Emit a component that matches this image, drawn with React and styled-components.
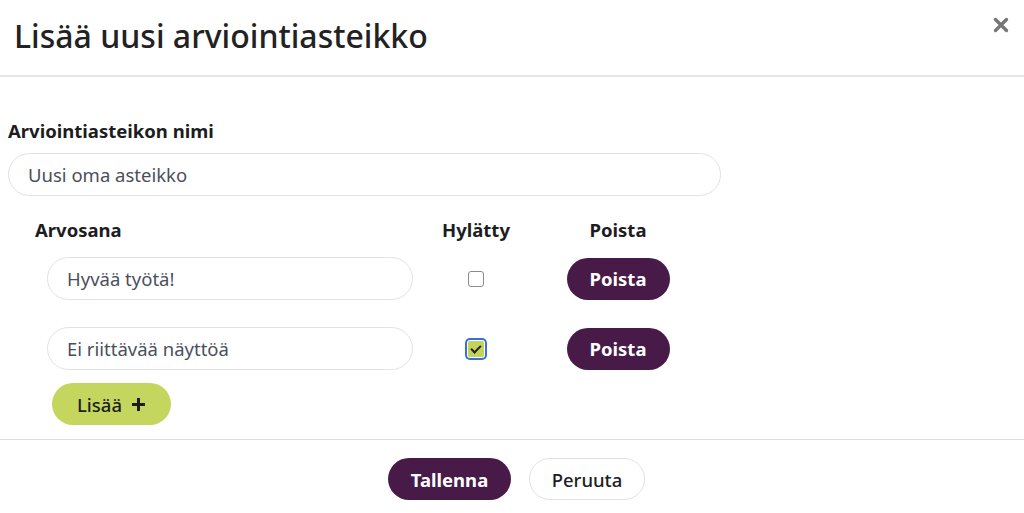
import React, { useState } from 'react';
import styled, { createGlobalStyle } from 'styled-components';

const GlobalStyle = createGlobalStyle`
  html, body {
    margin: 0;
    padding: 0;
    background: #fff;
  }
  body {
    font-family: "Noto Sans", "Open Sans", sans-serif;
    color: #1d1d1f;
  }
  * { box-sizing: border-box; }
`;

const App = () => {
  const [name, setName] = useState('Uusi oma asteikko');
  const [grades, setGrades] = useState([
    { label: 'Hyvää työtä!', failed: false },
    { label: 'Ei riittävää näyttöä', failed: true },
  ]);

  const update = (index, patch) => {
    setGrades(grades.map((g, i) => (i === index ? { ...g, ...patch } : g)));
  };

  return (
    <>
      <GlobalStyle />
      <Modal>
        <Header>
          <Title>Lisää uusi arviointiasteikko</Title>
          <CloseButton aria-label="Sulje">
            <svg width="16" height="16" viewBox="0 0 16 16">
              <path d="M2.5 2.5 L13.5 13.5 M13.5 2.5 L2.5 13.5" stroke="#777" strokeWidth="3.4" strokeLinecap="round" />
            </svg>
          </CloseButton>
        </Header>

        <Body>
          <Label>Arviointiasteikon nimi</Label>
          <TextInput value={name} onChange={e => setName(e.target.value)} />

          <TableHead>
            <HeadCell>Arvosana</HeadCell>
            <HeadCell center>Hylätty</HeadCell>
            <HeadCell center>Poista</HeadCell>
          </TableHead>

          <GradeRows>
            {grades.map((grade, index) => (
              <React.Fragment key={index}>
                <InputCell>
                  <TextInput
                    value={grade.label}
                    onChange={e => update(index, { label: e.target.value })}
                  />
                </InputCell>
                <CenterCell>
                  <Check
                    type="checkbox"
                    checked={grade.failed}
                    onChange={e => update(index, { failed: e.target.checked })}
                  />
                </CenterCell>
                <CenterCell>
                  <PillButton variant="dark" width="103px">Poista</PillButton>
                </CenterCell>
              </React.Fragment>
            ))}
          </GradeRows>

          <PillButton variant="lime" width="119px" className="add">
            Lisää
            <svg width="15" height="15" viewBox="0 0 15 15">
              <path d="M7.5 1 V14 M1 7.5 H14" stroke="#1d1d1f" strokeWidth="3" />
            </svg>
          </PillButton>
        </Body>

        <Footer>
          <PillButton variant="dark" width="123px">Tallenna</PillButton>
          <PillButton variant="light" width="116px">Peruuta</PillButton>
        </Footer>
      </Modal>
    </>
  );
};

export default App;

const Modal = styled.div`
  width: 1024px;
  height: 513px;
  background: #fff;
  display: flex;
  flex-direction: column;
`;

const Header = styled.div`
  height: 77px;
  padding: 0 14px;
  display: flex;
  justify-content: space-between;
  align-items: center;
  border-bottom: 2px solid #e6e6e6;
`;

const Title = styled.h2`
  margin: 0;
  font-size: 32px;
  font-weight: 500;
  color: #222;
  line-height: 40px;
  margin-top: -4px;
`;

const CloseButton = styled.button`
  border: none;
  background: none;
  padding: 0;
  margin-top: -26px;
  margin-right: 1px;
  display: flex;
  cursor: pointer;
`;

const Body = styled.div`
  padding: 43px 8px 0 8px;
  display: flex;
  flex-direction: column;
  align-items: flex-start;
  height: 362px;

  .add {
    margin: 13px 0 0 44px;
    gap: 9px;
  }
`;

const Label = styled.label`
  font-size: 18.5px;
  font-weight: 700;
  color: #1d1d1f;
  line-height: 22px;
  margin-bottom: 11px;
`;

const TextInput = styled.input`
  width: 713px;
  height: 43px;
  border: 1px solid #e2e2e2;
  border-radius: 22px;
  padding: 0 19px;
  font-family: inherit;
  font-size: 18.5px;
  color: #4a4f5b;
  background: #fff;
  outline: none;
`;

const columns = '381px 120px 164px';

const TableHead = styled.div`
  margin: 24px 0 0 27px;
  display: grid;
  grid-template-columns: ${columns};
  height: 20px;
  align-items: center;
`;

const GradeRows = styled.div`
  margin: 17px 0 0 27px;
  display: grid;
  grid-template-columns: ${columns};
  grid-auto-rows: 43px;
  row-gap: 27px;
  align-items: center;
`;

const HeadCell = styled.div`
  font-size: 18.5px;
  font-weight: 700;
  color: #1d1d1f;
  text-align: ${p => (p.center ? 'center' : 'left')};
  line-height: 20px;
`;

const InputCell = styled.div`
  padding-left: 12px;

  input {
    width: 366px;
  }
`;

const CenterCell = styled.div`
  display: flex;
  justify-content: center;
  align-items: center;
`;

const Check = styled.input`
  appearance: none;
  margin: 0;
  width: 16px;
  height: 16px;
  border: 1.5px solid #8a8a8a;
  border-radius: 3px;
  background: #fff;
  position: relative;
  cursor: pointer;

  &:checked {
    border: none;
    background: #c3d45a;
    box-shadow: 0 0 0 1px #fff, 0 0 0 3px #3a6fd8;
    border-radius: 2px;
  }

  &:checked::after {
    content: '';
    position: absolute;
    left: 5px;
    top: 2px;
    width: 4px;
    height: 8px;
    border: solid #222;
    border-width: 0 2px 2px 0;
    transform: rotate(45deg);
  }
`;

const PillButton = styled.button`
  height: 42px;
  width: ${p => p.width};
  border-radius: 21px;
  font-family: inherit;
  font-size: 18.5px;
  font-weight: ${p => (p.variant === 'dark' ? 700 : 500)};
  display: inline-flex;
  align-items: center;
  justify-content: center;
  cursor: pointer;
  background: ${p =>
    p.variant === 'dark' ? '#481a48' : p.variant === 'lime' ? '#c4d65d' : '#fff'};
  color: ${p => (p.variant === 'dark' ? '#fff' : '#1d1d1f')};
  border: ${p => (p.variant === 'light' ? '1px solid #e2e2e2' : 'none')};
`;

const Footer = styled.div`
  border-top: 1px solid #dcdcdc;
  flex: 1;
  display: flex;
  justify-content: center;
  align-items: flex-start;
  padding-top: 18px;
  gap: 18px;
  padding-left: 9px;
`;
